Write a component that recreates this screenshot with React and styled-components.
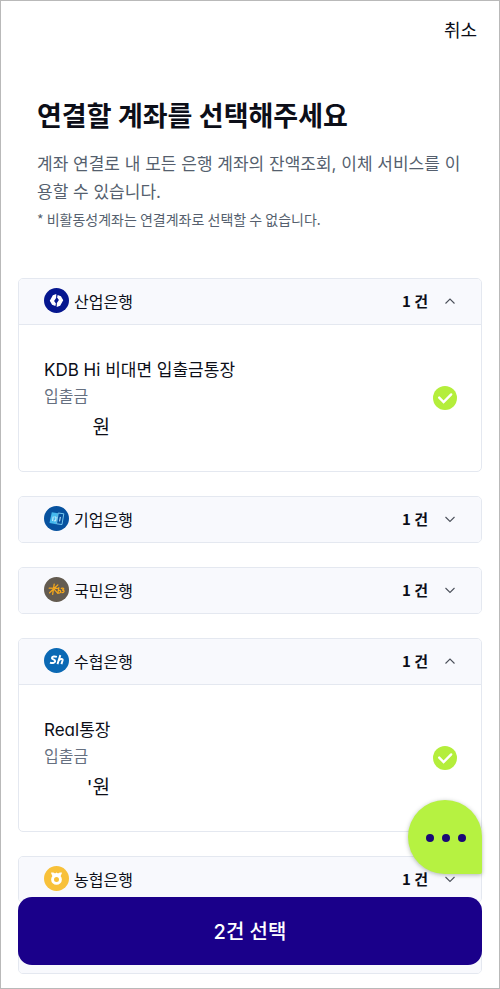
import { useState } from "react";
import styled, { createGlobalStyle } from "styled-components";

const GlobalStyle = createGlobalStyle`
  * {
    box-sizing: border-box;
  }
  body {
    margin: 0;
    background: #fff;
    color: #0c0e18;
    font-family: "Inter", "Noto Sans CJK KR", sans-serif;
    font-feature-settings: "cv11";
  }
  button {
    font: inherit;
    font-feature-settings: inherit;
    color: inherit;
    cursor: pointer;
  }
`;

const Page = styled.div`
  min-height: 100vh;
  border: 1px solid #b9b9b9;
  padding-bottom: 14px;
`;
const TopBar = styled.header`
  display: flex;
  justify-content: flex-end;
  padding: 14px 22px 0;
`;
const Cancel = styled.button`
  padding: 0;
  border: none;
  background: none;
  font-size: 18px;
  line-height: 32px;
`;
const Intro = styled.section`
  padding: 50px 36px 0;
`;
const Title = styled.h1`
  margin: 0;
  font-size: 27px;
  font-weight: 700;
  line-height: 40px;
`;
const Description = styled.p`
  margin: 13px 0 0;
  font-size: 17px;
  line-height: 28px;
  color: #555f6e;
  word-break: break-all;
`;
const Notice = styled.p`
  margin: 3px 0 0;
  font-family: "Noto Sans CJK KR", sans-serif;
  font-size: 14px;
  line-height: 20px;
  color: #555f6e;
`;
const BankList = styled.main`
  display: flex;
  flex-direction: column;
  gap: 24px;
  padding: 49px 17px 0;
`;
const Card = styled.section`
  border: 1px solid #e4e8f0;
  border-radius: 5px;
  overflow: hidden;
`;
const CardHeader = styled.button`
  display: flex;
  align-items: center;
  width: 100%;
  height: 45px;
  padding: 0 23px 2px 25px;
  border: none;
  background: #f8f9fd;
  text-align: left;
`;
const BankName = styled.span`
  flex: 1;
  margin-left: 5px;
  font-size: 16px;
`;
const Count = styled.span`
  margin-right: 14px;
  font-family: "Noto Sans CJK KR", sans-serif;
  font-size: 15px;
  font-weight: 700;
`;
const Account = styled.div`
  display: flex;
  align-items: center;
  justify-content: space-between;
  padding: 0 23px 0 25px;
  border-top: 1px solid #e4e8f0;
`;
const AccountInfo = styled.div`
  padding: 31px 0 24px;
`;
const AccountName = styled.label`
  display: block;
  font-size: 17px;
  line-height: 28px;
`;
const AccountType = styled.div`
  font-size: 16px;
  line-height: 25px;
  color: #667080;
`;
const Amount = styled.div`
  width: 66px;
  font-size: 19px;
  line-height: 38px;
  text-align: right;
`;
const CheckWrap = styled.span`
  position: relative;
  display: flex;
  width: 26px;
  height: 26px;

  svg {
    position: absolute;
    inset: 0;
    pointer-events: none;
  }
`;
const Check = styled.input`
  appearance: none;
  width: 24px;
  height: 24px;
  margin: 1px;
  border-radius: 50%;
  background: #d5d9e0;
  cursor: pointer;

  &:checked {
    background: #b4ee3b;
  }
`;
const ChatButton = styled.button`
  position: fixed;
  right: 18px;
  bottom: 115px;
  display: flex;
  align-items: center;
  justify-content: center;
  gap: 8px;
  width: 74px;
  height: 74px;
  padding: 1px 0 0 1px;
  border: none;
  border-radius: 50% 50% 2px 50%;
  background: #b6f241;
  box-shadow: 0 1px 4px rgba(40, 60, 40, 0.35);
`;
const Dot = styled.span`
  width: 8px;
  height: 8px;
  border-radius: 50%;
  background: #1a0876;
`;
const SubmitButton = styled.button`
  position: fixed;
  right: 18px;
  bottom: 24px;
  left: 18px;
  height: 68px;
  padding: 0 0 2px;
  border: none;
  border-radius: 14px;
  background: #1a008a;

  && {
    color: #fff;
    font-size: 20px;
    font-weight: 500;
  }
`;

const logos = {
  kdb: (
    <>
      <circle cx="13" cy="13" r="13" fill="#06178f" />
      <path
        d="M12.8 6.2 9.2 7.6 6 13.2l2.4 4.2 3.4 1.4.6-2.6-1.9-2.6 2.1-3.2Z"
        fill="#fff"
      />
      <path
        d="m13.2 19.8 3.6-1.4 3.2-5.6-2.4-4.2-3.4-1.4-.6 2.6 1.9 2.6-2.1 3.2Z"
        fill="#fff"
      />
    </>
  ),
  ibk: (
    <>
      <circle cx="13" cy="13" r="13" fill="#07529f" />
      <path d="m8.1 6.5 6.4 1-1.8 11.4-7-1.2Z" fill="#45b9ed" />
      <path
        d="m14.8 7.3 5.8.8-1.9 11.2-5.7-.8Z"
        fill="#07529f"
        stroke="#7bcdf1"
        strokeWidth="1"
      />
      <path
        d="m9.6 11-.7 4.6m2-4.3 1.7.3-.6 4-1.8-.3m6.8-3.9-.8 4.6"
        fill="none"
        stroke="#d5f1ff"
        strokeWidth="1"
      />
    </>
  ),
  kb: (
    <>
      <circle cx="13" cy="13" r="13" fill="#635b50" />
      <path
        d="m5.4 11.6 8.6.2M10.6 7.4 9 18M14.4 8.2 5.8 16.4M10 12l4.4 5M15.4 11l-.8 5M14.8 14.4c2.2-1.2 3.4.9 1.8 2-.7.4-1.5.3-2-.2M18 11.8c3-.8 3.4 1 .8 1.8 3.2-.2 2.4 2.8-.2 2.6"
        fill="none"
        stroke="#f6a81b"
        strokeWidth="1.3"
        strokeLinecap="round"
      />
    </>
  ),
  suhyup: (
    <>
      <circle cx="13" cy="13" r="13" fill="#0b69b4" />
      <path
        d="M13.4 9.2c-2.2-.8-5-.5-5.2 1.2-.2 1.6 3.8 1.5 3.4 3.5-.3 2-3.4 2-5.4 1.2M17 7.4l-3 9.4m1.4-3.8c1.4-1.8 4.4-2.4 4-.3l-1.3 4.1"
        fill="none"
        stroke="#fff"
        strokeWidth="2"
      />
    </>
  ),
  nonghyup: (
    <>
      <circle cx="13" cy="13" r="13" fill="#f8c13a" />
      <path
        d="M7.2 7c2-.6 3.4 0 4.2.8L13 6.8l1.6 1c.8-.8 2.2-1.4 4.2-.8l-1.6 3.6H8.8Z"
        fill="#fff"
      />
      <circle cx="13" cy="14" r="4.1" fill="none" stroke="#fff" strokeWidth="3" />
    </>
  ),
  shinhan: <circle cx="13" cy="13" r="13" fill="#1b4fc2" />,
};

const banks = [
  {
    id: "kdb",
    name: "산업은행",
    account: { name: "KDB Hi 비대면 입출금통장", type: "입출금", amount: "원" },
  },
  { id: "ibk", name: "기업은행" },
  { id: "kb", name: "국민은행" },
  {
    id: "suhyup",
    name: "수협은행",
    account: { name: "Real통장", type: "입출금", amount: "'원" },
  },
  { id: "nonghyup", name: "농협은행" },
  { id: "shinhan", name: "신한은행" },
];

const BankLogo = ({ id }) => (
  <svg width="25" height="25" viewBox="0 0 26 26" aria-hidden="true">
    {logos[id]}
  </svg>
);

const Arrow = ({ up }) => (
  <svg width="16" height="16" viewBox="0 0 16 16" aria-hidden="true">
    <path
      d={up ? "m3.5 10.5 4.5-4.5 4.5 4.5" : "m3.5 6 4.5 4.5 4.5-4.5"}
      fill="none"
      stroke="#4c515b"
      strokeWidth="1.1"
    />
  </svg>
);

const App = () => {
  const [opened, setOpened] = useState(["kdb", "suhyup"]);
  const [selected, setSelected] = useState(["kdb", "suhyup"]);

  const toggle = (list, id) =>
    list.includes(id) ? list.filter((item) => item !== id) : [...list, id];

  return (
    <Page>
      <GlobalStyle />
      <TopBar>
        <Cancel type="button">취소</Cancel>
      </TopBar>
      <Intro>
        <Title>연결할 계좌를 선택해주세요</Title>
        <Description>
          계좌 연결로 내 모든 은행 계좌의 잔액조회, 이체 서비스를 이용할 수
          있습니다.
        </Description>
        <Notice>* 비활동성계좌는 연결계좌로 선택할 수 없습니다.</Notice>
      </Intro>
      <BankList>
        {banks.map(({ id, name, account }) => (
          <Card key={id}>
            <CardHeader
              type="button"
              aria-expanded={opened.includes(id)}
              onClick={() => setOpened(toggle(opened, id))}
            >
              <BankLogo id={id} />
              <BankName>{name}</BankName>
              <Count>1 건</Count>
              <Arrow up={opened.includes(id)} />
            </CardHeader>
            {account && opened.includes(id) && (
              <Account>
                <AccountInfo>
                  <AccountName htmlFor={`account-${id}`}>
                    {account.name}
                  </AccountName>
                  <AccountType>{account.type}</AccountType>
                  <Amount>{account.amount}</Amount>
                </AccountInfo>
                <CheckWrap>
                  <Check
                    type="checkbox"
                    id={`account-${id}`}
                    checked={selected.includes(id)}
                    onChange={() => setSelected(toggle(selected, id))}
                  />
                  <svg width="26" height="26" viewBox="0 0 26 26">
                    <path
                      d="m7.2 12.6 4.4 4.4 7.6-7.6"
                      fill="none"
                      stroke="#fff"
                      strokeWidth="2.4"
                      strokeLinecap="round"
                    />
                  </svg>
                </CheckWrap>
              </Account>
            )}
          </Card>
        ))}
      </BankList>
      <ChatButton type="button" aria-label="채팅 상담">
        <Dot />
        <Dot />
        <Dot />
      </ChatButton>
      <SubmitButton type="button">{selected.length}건 선택</SubmitButton>
    </Page>
  );
};

export default App;
